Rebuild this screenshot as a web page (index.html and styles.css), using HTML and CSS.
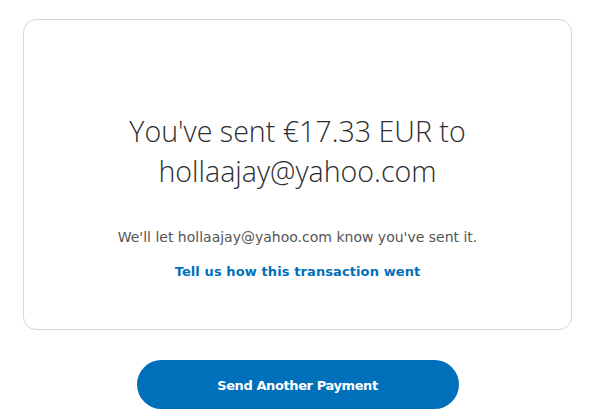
FILE: index.html
```html
<!DOCTYPE html>
<html lang="en">
<head>
<meta charset="utf-8">
<title>Payment sent</title>
<link rel="stylesheet" href="styles.css">
</head>
<body>
<main class="page">
  <section class="card">
    <h1 class="title">You've sent €17.33 EUR to<br>hollaajay@yahoo.com</h1>
    <p class="note">We'll let hollaajay@yahoo.com know you've sent it.</p>
    <a class="feedback" href="#">Tell us how this transaction went</a>
  </section>
  <div class="actions">
    <button class="primary" type="button">Send Another Payment</button>
  </div>
</main>
</body>
</html>
```

FILE: styles.css
```css
html, body {
  margin: 0;
  padding: 0;
  background: #ffffff;
}
.page {
  padding: 19px 24px 0 23px;
  display: flex;
  flex-direction: column;
}
.card {
  border: 1px solid #d9d7d0;
  border-radius: 13px;
  padding: 91px 20px 47px;
  display: flex;
  flex-direction: column;
  align-items: center;
  text-align: center;
}
.title {
  margin: 0;
  font-family: "Open Sans", sans-serif;
  font-weight: 300;
  font-size: 28.6px;
  line-height: 40px;
  color: #2c2e2f;
}
.note {
  margin: 36px 0 0;
  font-family: "DejaVu Sans", sans-serif;
  font-size: 14px;
  line-height: 20px;
  color: #555555;
}
.feedback {
  margin-top: 15px;
  font-family: "DejaVu Sans", sans-serif;
  font-weight: bold;
  font-size: 13px;
  letter-spacing: 0.1px;
  line-height: 20px;
  color: #0070ba;
  text-decoration: none;
}
.actions {
  display: flex;
  justify-content: center;
  margin-top: 30px;
}
.primary {
  width: 322px;
  height: 49px;
  padding: 2px 0 0;
  border: none;
  border-radius: 25px;
  background: #0070ba;
  color: #ffffff;
  font-family: "DejaVu Sans", sans-serif;
  font-weight: bold;
  font-size: 13px;
  letter-spacing: -0.4px;
}
```
